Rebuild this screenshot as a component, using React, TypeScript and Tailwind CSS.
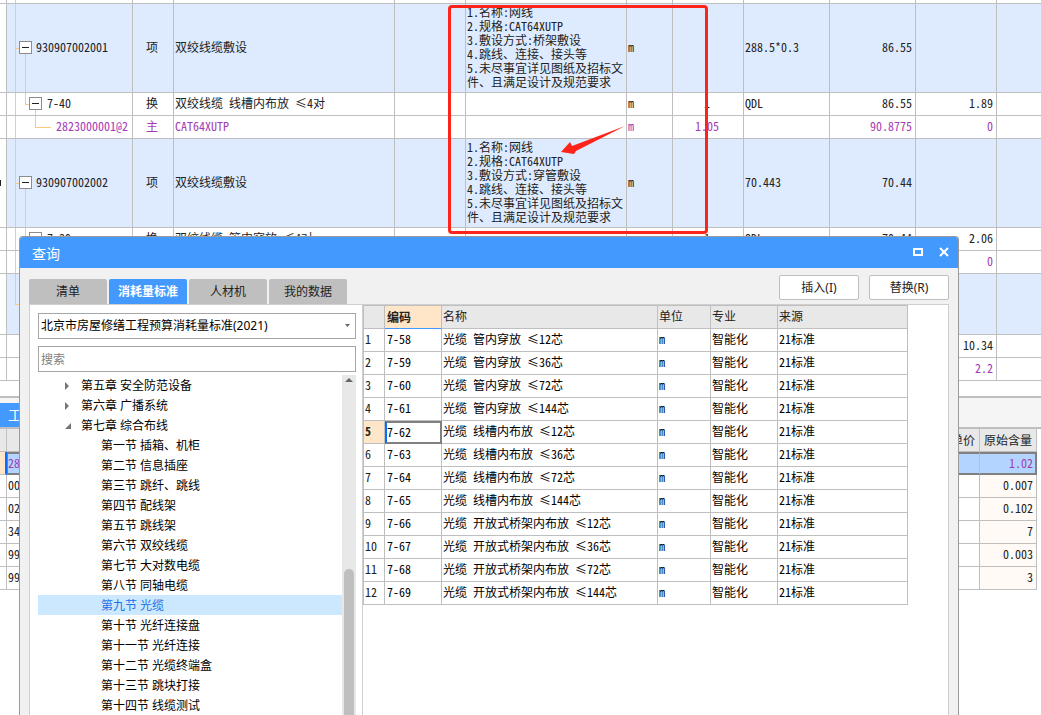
import clsx from "clsx";

type Kind = "gap" | "item" | "quota" | "material";

interface BillRow {
  kind: Kind;
  height: string;
  code?: string;
  type?: string;
  name?: string;
  feature?: string[];
  unit?: string;
  qty?: string;
  expr?: string;
  amount?: string;
  price?: string;
  mark?: boolean;
  last?: boolean;
}

const feature = (method: string) => [
  "1.名称:网线",
  "2.规格:CAT64XUTP",
  `3.敷设方式:${method}`,
  "4.跳线、连接、接头等",
  "5.未尽事宜详见图纸及招标文件、且满足设计及规范要求",
];

const billRows: BillRow[] = [
  { kind: "gap", height: "h-1" },
  {
    kind: "item",
    height: "h-[89px]",
    code: "930907002001",
    type: "项",
    name: "双绞线缆敷设",
    feature: feature("桥架敷设"),
    unit: "m",
    expr: "288.5*0.3",
    amount: "86.55",
  },
  {
    kind: "quota",
    height: "h-[23px]",
    code: "7-40",
    type: "换",
    name: "双绞线缆 线槽内布放 ≤4对",
    unit: "m",
    qty: "1",
    expr: "QDL",
    amount: "86.55",
    price: "1.89",
  },
  {
    kind: "material",
    height: "h-[23px]",
    code: "2823000001@2",
    type: "主",
    name: "CAT64XUTP",
    unit: "m",
    qty: "1.05",
    amount: "90.8775",
    price: "0",
  },
  {
    kind: "item",
    height: "h-[89px]",
    code: "930907002002",
    type: "项",
    name: "双绞线缆敷设",
    feature: feature("穿管敷设"),
    unit: "m",
    expr: "70.443",
    amount: "70.44",
    mark: true,
  },
  {
    kind: "quota",
    height: "h-[23px]",
    code: "7-39",
    type: "换",
    name: "双绞线缆 管内穿放 ≤4对",
    unit: "m",
    qty: "1",
    expr: "QDL",
    amount: "70.44",
    price: "2.06",
  },
  { kind: "material", height: "h-[23px]", price: "0" },
  { kind: "item", height: "h-[61px]", last: true },
  { kind: "gap", height: "h-[23px]", price: "10.34", last: true },
  { kind: "gap", height: "h-[23px]", price: "2.2", last: true },
];

const usageRows = [
  { code: "28", value: "1.02" },
  { code: "00", value: "0.007" },
  { code: "02", value: "0.102" },
  { code: "34", value: "7" },
  { code: "99", value: "0.003" },
  { code: "99", value: "3" },
];

const chapters = [
  { label: "第五章 安全防范设备", open: false },
  { label: "第六章 广播系统", open: false },
  { label: "第七章 综合布线", open: true },
];

const sections = [
  "第一节 插箱、机柜",
  "第二节 信息插座",
  "第三节 跳纤、跳线",
  "第四节 配线架",
  "第五节 跳线架",
  "第六节 双绞线缆",
  "第七节 大对数电缆",
  "第八节 同轴电缆",
  "第九节 光缆",
  "第十节 光纤连接盘",
  "第十一节 光纤连接",
  "第十二节 光缆终端盒",
  "第十三节 跳块打接",
  "第十四节 线缆测试",
];

const quotas = [
  ["7-58", "光缆 管内穿放 ≤12芯"],
  ["7-59", "光缆 管内穿放 ≤36芯"],
  ["7-60", "光缆 管内穿放 ≤72芯"],
  ["7-61", "光缆 管内穿放 ≤144芯"],
  ["7-62", "光缆 线槽内布放 ≤12芯"],
  ["7-63", "光缆 线槽内布放 ≤36芯"],
  ["7-64", "光缆 线槽内布放 ≤72芯"],
  ["7-65", "光缆 线槽内布放 ≤144芯"],
  ["7-66", "光缆 开放式桥架内布放 ≤12芯"],
  ["7-67", "光缆 开放式桥架内布放 ≤36芯"],
  ["7-68", "光缆 开放式桥架内布放 ≤72芯"],
  ["7-69", "光缆 开放式桥架内布放 ≤144芯"],
];

const tabs = ["清单", "消耗量标准", "人材机", "我的数据"];

// grids use half-width latin so that digits take half a CJK cell
const gridFont =
  "font-['Noto_Sans_CJK_SC',sans-serif] [font-feature-settings:'hwid'] text-xs";

const cell = "border-r border-b border-[#bfbfbf] pt-0 pr-[3px] pb-0.5 pl-px";

function Minus({ x }: { x: number }) {
  return (
    <svg x={x} y="50%" overflow="visible">
      <rect x="0.5" y="-6.5" width="12" height="12" fill="#fff" stroke="#8c8c8c" />
      <path d="M3 -0.5H10" stroke="#222" />
    </svg>
  );
}

function TreeLines({ row }: { row: BillRow }) {
  if (row.last && row.kind !== "item") return null;
  return (
    <svg
      className="absolute inset-0 h-full w-12"
      stroke="#ffc880"
      fill="none"
      shapeRendering="crispEdges"
      aria-hidden="true"
    >
      <line x1="8.5" y1="0" x2="8.5" y2={row.last ? "50%" : "101%"} />
      {row.kind === "item" && (
        <>
          <line x1="8" y1="50%" x2="12" y2="50%" />
          <line x1="18.5" y1="50%" x2="18.5" y2="101%" />
          <Minus x={12} />
        </>
      )}
      {row.kind === "quota" && (
        <>
          <line x1="18.5" y1="0" x2="18.5" y2="50%" />
          <line x1="18" y1="50%" x2="22" y2="50%" />
          <line x1="28.5" y1="50%" x2="28.5" y2="101%" />
          <Minus x={22} />
        </>
      )}
      {row.kind === "material" && (
        <>
          <line x1="28.5" y1="0" x2="28.5" y2="50%" />
          <line x1="28" y1="50%" x2="44" y2="50%" />
        </>
      )}
    </svg>
  );
}

function BillTable() {
  return (
    <table className={clsx(gridFont, "w-full table-fixed border-separate border-spacing-0")}>
      <colgroup>
        <col className="w-[7px]" />
        <col className="w-[126px]" />
        <col className="w-[41px]" />
        <col className="w-[221px]" />
        <col className="w-[71px]" />
        <col className="w-[161px]" />
        <col className="w-[46px]" />
        <col className="w-[71px]" />
        <col className="w-[86px]" />
        <col className="w-[86px]" />
        <col className="w-[81px]" />
        <col />
      </colgroup>
      <tbody>
        {billRows.map((row, i) => {
          const isPurple = row.kind === "material" || row.price === "2.2";
          return (
            <tr
              key={i}
              className={clsx(
                row.height,
                row.kind === "item" && "bg-[#deebff]",
                isPurple ? "text-[#a33cb4]" : "text-[#222]"
              )}
            >
              <td className="border-r border-b border-[#bfbfbf] bg-white p-0">
                {row.mark && <div className="h-1.5 w-px bg-[#222]" />}
              </td>
              <td
                className={clsx(
                  "relative border-r border-b border-[#bfbfbf] pt-0 pr-0 pb-0.5",
                  row.kind === "item" && "pl-[29px]",
                  row.kind === "quota" && "pl-10",
                  row.kind === "material" && "pl-[49px]"
                )}
              >
                <TreeLines row={row} />
                {row.code}
              </td>
              <td className={clsx(cell, "text-center")}>{row.type}</td>
              <td className={cell}>{row.name}</td>
              <td className={cell} />
              <td className={clsx(cell, "leading-[14px]")}>
                {row.feature?.map((line) => (
                  <p key={line}>{line}</p>
                ))}
              </td>
              <td className={cell}>{row.unit}</td>
              <td className={clsx(cell, "text-center")}>{row.qty}</td>
              <td className={cell}>{row.expr}</td>
              <td className={clsx(cell, "text-right")}>{row.amount}</td>
              <td className={clsx(cell, "text-right")}>{row.price}</td>
              <td className="border-b border-[#bfbfbf] p-0" />
            </tr>
          );
        })}
      </tbody>
    </table>
  );
}

function UsagePanel() {
  return (
    <section className="mt-[15px] border-t-2 border-[#bfbfbf]">
      <div className="flex border-b-2 border-[#bfbfbf] bg-[#f5f5f5] pt-[5px]">
        <button className="h-6 w-24 bg-[#4499ff] pl-2 text-left text-sm text-white">工</button>
      </div>
      <div className="pr-1">
        <table className={clsx(gridFont, "w-full table-fixed border-separate border-spacing-0 text-[#222]")}>
          <colgroup>
            <col className="w-[7px]" />
            <col />
            <col className="w-20" />
            <col className="w-[57px]" />
          </colgroup>
          <thead>
            <tr className="h-[23px] bg-[#e8e8e8]">
              <th className="border-r border-b border-[#bfbfbf] p-0" />
              <th className="border-r border-b border-[#bfbfbf] p-0" />
              <th className="border-r border-b border-[#bfbfbf] py-0 pr-1 text-right font-normal">单价</th>
              <th className="border-r border-b border-[#bfbfbf] p-0 text-center font-normal">原始含量</th>
            </tr>
          </thead>
          <tbody>
            {usageRows.map((row, i) =>
              i === 0 ? (
                <tr key={i} className="h-[23px] bg-[#b3d4ff] text-[#a33cb4]">
                  <td className="border-r-2 border-b border-r-[#0a6cff] border-b-[#bfbfbf] bg-[#ffe6c8] p-0" />
                  <td className="border-y-2 border-l border-[#808080] pt-0 pb-0.5">{row.code}</td>
                  <td className="border-y-2 border-r border-y-[#808080] border-r-[#bfbfbf] p-0" />
                  <td className="border-y-2 border-r-2 border-[#808080] pt-0 pr-0.5 pb-0.5 text-right">{row.value}</td>
                </tr>
              ) : (
                <tr key={i} className="h-[23px]">
                  <td className="border-r border-b border-[#bfbfbf] p-0" />
                  <td className={cell}>{row.code}</td>
                  <td className={cell} />
                  <td className={clsx(cell, "bg-[#fffaf5] text-right")}>{row.value}</td>
                </tr>
              )
            )}
          </tbody>
        </table>
      </div>
    </section>
  );
}

function QuotaTable() {
  return (
    <div className="w-[545px] border-t border-l border-[#bfbfbf]">
      <table className={clsx(gridFont, "w-full table-fixed border-separate border-spacing-0 text-black")}>
        <colgroup>
          <col className="w-[21px]" />
          <col className="w-[57px]" />
          <col className="w-[216px]" />
          <col className="w-[53px]" />
          <col className="w-[67px]" />
          <col className="w-[130px]" />
        </colgroup>
        <thead>
          <tr className="h-[23px] bg-[#e8e8e8] text-left text-[#222]">
            <th className={cell} />
            <th className="border-r border-b border-r-[#bfbfbf] border-b-[#4499ff] bg-[#ffe6c8] px-0.5 py-0 font-bold">
              编码
            </th>
            <th className={clsx(cell, "font-normal")}>名称</th>
            <th className={clsx(cell, "font-normal")}>单位</th>
            <th className={clsx(cell, "font-normal")}>专业</th>
            <th className={clsx(cell, "font-normal")}>来源</th>
          </tr>
        </thead>
        <tbody>
          {quotas.map(([code, name], i) => {
            const active = code === "7-62";
            return (
              <tr key={code} className="h-[23px]">
                <td className={clsx(cell, "text-[#222]", active && "bg-[#ffe6c8] font-bold")}>{i + 1}</td>
                {active ? (
                  <td className="border-2 border-[#808080] border-l-[#0a6cff] px-0 pt-0 pb-0.5">{code}</td>
                ) : (
                  <td className="border-r border-b border-[#bfbfbf] px-0.5 pt-0 pb-0.5">{code}</td>
                )}
                <td className={cell}>{name}</td>
                <td className={cell}>m</td>
                <td className={cell}>智能化</td>
                <td className={cell}>21标准</td>
              </tr>
            );
          })}
        </tbody>
      </table>
    </div>
  );
}

function ChapterTree() {
  return (
    <div className="mt-[3px] flex min-h-0 flex-1 overflow-hidden">
      <ul className="flex-1 text-black">
        {chapters.map((c) => (
          <li key={c.label} className="flex h-5 items-center pt-0.5 pl-[26px]">
            <svg className="mr-[9px] h-2 w-2" viewBox="0 0 8 8" fill="#757575" aria-hidden="true">
              {c.open ? <path d="M7 1V7H1Z" /> : <path d="M1 0L5 4L1 8Z" />}
            </svg>
            {c.label}
          </li>
        ))}
        {sections.map((s) => (
          <li
            key={s}
            className={clsx(
              "flex h-5 items-center pt-0.5 pl-[63px]",
              s === "第九节 光缆" && "bg-[#cce8ff] text-[#1a73e8]"
            )}
          >
            {s}
          </li>
        ))}
      </ul>
      <div className="flex w-3.5 flex-col items-center bg-[#e8e8e8]">
        <svg className="mt-[3px] h-1 w-2" viewBox="0 0 8 4" fill="#666" aria-hidden="true">
          <path d="M4 0L8 4H0Z" />
        </svg>
        <div className="mt-[187px] w-2.5 flex-1 rounded-t-full bg-[#bfbfbf]" />
      </div>
    </div>
  );
}

function QueryDialog() {
  return (
    <div
      role="dialog"
      aria-label="查询"
      className="absolute top-[236px] right-[82px] bottom-0 left-[19px] flex flex-col overflow-hidden rounded-t border-x border-t border-[#9a9a9a] bg-[#f1f1f1] text-xs"
    >
      <header className="flex h-[31px] shrink-0 items-center bg-[#4499ff] pr-[9px] pb-0.5 pl-3 text-white">
        <h1 className="flex-1 pt-1 text-sm">查询</h1>
        <button aria-label="最大化" className="mr-4">
          <svg className="h-2.5 w-2.5" viewBox="0 0 10 10" shapeRendering="crispEdges">
            <path d="M0 1H10V9H0ZM2 3V7H8V3Z" fill="#fff" fillRule="evenodd" />
          </svg>
        </button>
        <button aria-label="关闭">
          <svg className="h-2.5 w-2.5" viewBox="0 0 10 10">
            <path d="M1 1L9 9M9 1L1 9" stroke="#fff" strokeWidth="2" />
          </svg>
        </button>
      </header>

      <div className="flex min-h-0 flex-1 flex-col px-[9px]">
        <div className="flex h-9 shrink-0 items-end gap-0.5">
          {tabs.map((tab) => (
            <button
              key={tab}
              className={clsx(
                "h-[25px] w-[78px] rounded-t-xs",
                tab === "消耗量标准" ? "bg-[#4499ff] font-bold text-white" : "bg-[#bfbfbf] text-[#222]"
              )}
            >
              {tab}
            </button>
          ))}
          <div className="mb-1 ml-auto flex gap-2.5 text-[#222]">
            <button className="h-[25px] w-20 rounded-xs border border-[#bfbfbf] bg-white">插入(I)</button>
            <button className="h-[25px] w-20 rounded-xs border border-[#bfbfbf] bg-white">替换(R)</button>
          </div>
        </div>

        <div className="flex min-h-0 flex-1 border-x border-t border-[#cfcfcf] bg-white">
          <div className="flex w-[332px] shrink-0 flex-col pt-2 pr-1.5 pl-2">
            <div className="relative">
              <select
                aria-label="标准"
                className="h-[26px] w-full appearance-none border border-[#a6a6a6] bg-white px-0.5 text-black"
              >
                <option>北京市房屋修缮工程预算消耗量标准(2021)</option>
              </select>
              <svg
                className="pointer-events-none absolute top-[11px] right-1.5 h-[3px] w-[5px]"
                viewBox="0 0 5 3"
                fill="#666"
              >
                <path d="M0 0H5L2.5 3Z" />
              </svg>
            </div>
            <input
              aria-label="搜索"
              placeholder="搜索"
              className="mt-[7px] h-[26px] w-full border border-[#a6a6a6] bg-white px-0.5 placeholder:text-[#808080]"
            />
            <ChapterTree />
          </div>
          <div className="flex-1 border-l border-[#cfcfcf]">
            <QuotaTable />
          </div>
        </div>
      </div>
    </div>
  );
}

export default function App() {
  return (
    <main className="relative h-screen overflow-hidden bg-white font-['Noto_Sans','Noto_Sans_CJK_SC',sans-serif]">
      <BillTable />
      <UsagePanel />

      {/* Markup over the feature column */}
      <div className="absolute top-[5px] left-[448px] h-[229px] w-[260px] rounded-sm border-3 border-[#ff2419]" />
      <svg className="absolute top-[124px] left-[560px] h-9 w-[66px]" viewBox="0 0 66 36" fill="#ff2419" aria-hidden="true">
        <path d="M1 28L10 18L12 22L65 2L16 27L14 30Z" />
      </svg>

      <QueryDialog />
    </main>
  );
}
